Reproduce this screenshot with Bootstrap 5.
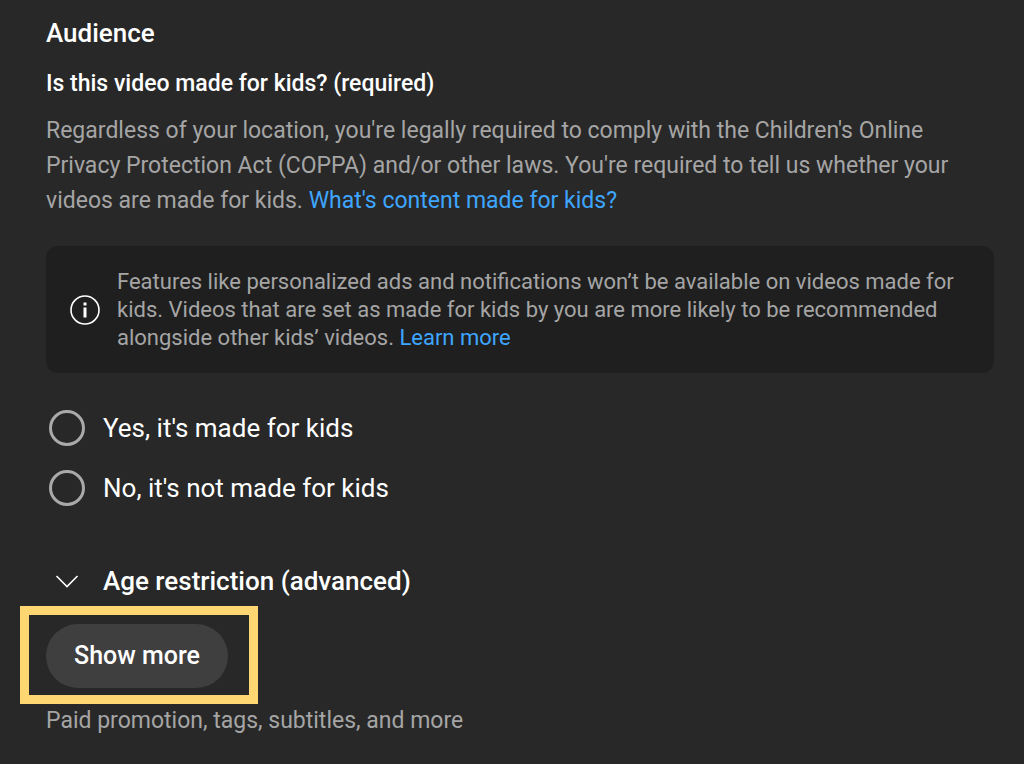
<!DOCTYPE html>
<html lang="en">
<head>
<meta charset="utf-8">
<meta name="viewport" content="width=device-width, initial-scale=1">
<title>Audience</title>
<link href="https://cdn.jsdelivr.net/npm/bootstrap@5.3.0/dist/css/bootstrap.min.css" rel="stylesheet">
<style>
body{background:#282828;color:#fff;font-family:Roboto,sans-serif;min-height:100vh}
.panel{padding:15px 30px 24px 46px}
.title{font-size:26px;line-height:36px;font-weight:500}
.question{font-size:23px;line-height:32px;font-weight:500;margin-top:17px}
.muted{color:#a5a5a5}
a{color:#3ea6ff;text-decoration:none}
.intro{font-size:23px;line-height:35px;margin-top:13px}
.notice{background:#1f1f1f;border-radius:12px;margin-top:28px;padding:22px 24px 21px;gap:17px}
.notice-text{font-size:22px;line-height:28px}
.choices{margin:37px 0 0 3px;gap:24px}
.choice{gap:18px;font-size:26px;line-height:36px}
.choice input{width:36px;height:36px;margin:0;background-color:transparent;border:3px solid #aaa;box-shadow:none}
.choice input:checked{background-color:#3ea6ff}
.advanced{gap:18px;font-size:26px;line-height:36px;font-weight:500;margin:57px 0 0 3px;color:#fff}
.highlight{border:9px solid #ffd772;margin:7px 0 0 -26px;padding:9px 21px 7px 17px}
.more{background:#3f3f3f;color:#fff;font-size:25px;line-height:36px;font-weight:500;padding:14px 28px;border:0}
.more:hover{background:#535353;color:#fff}
.hint{font-size:23px;line-height:32px;margin-top:1px}
</style>
</head>
<body>
<main class="panel">
<h1 class="title mb-0">Audience</h1>
<h2 class="question mb-0">Is this video made for kids? (required)</h2>
<p class="intro muted mb-0">Regardless of your location, you're legally required to comply with the Children's Online Privacy Protection Act (COPPA) and/or other laws. You're required to tell us whether your videos are made for kids. <a href="#">What's content made for kids?</a></p>
<div class="notice d-flex align-items-center">
<svg class="flex-shrink-0" width="30" height="30" viewBox="0 0 30 30" fill="none" stroke="#fff" aria-hidden="true"><circle cx="15" cy="15" r="14" stroke-width="1.6"/><path d="M15 12.500v10M15 7.500v3" stroke-width="3"/></svg>
<p class="notice-text muted mb-0">Features like personalized ads and notifications won’t be available on videos made for kids. Videos that are set as made for kids by you are more likely to be recommended alongside other kids’ videos. <a href="#">Learn more</a></p>
</div>
<div class="choices d-flex flex-column" role="radiogroup" aria-label="Is this video made for kids?">
<div class="choice d-flex align-items-center"><input class="form-check-input" type="radio" name="kids" id="kids-yes"><label for="kids-yes">Yes, it's made for kids</label></div>
<div class="choice d-flex align-items-center"><input class="form-check-input" type="radio" name="kids" id="kids-no"><label for="kids-no">No, it's not made for kids</label></div>
</div>
<button class="advanced d-flex align-items-center border-0 bg-transparent p-0" type="button">
<svg width="36" height="36" viewBox="0 0 36 36" fill="none" stroke="#fff" stroke-width="1.6" aria-hidden="true"><path d="M7.500 13 18 23.500l10.500-10.500"/></svg>
<span>Age restriction (advanced)</span></button>
<div class="d-flex"><div class="highlight"><button class="more btn rounded-pill" type="button">Show more</button></div></div>
<p class="hint muted mb-0">Paid promotion, tags, subtitles, and more</p>
</main>
<script src="https://cdn.jsdelivr.net/npm/bootstrap@5.3.0/dist/js/bootstrap.bundle.min.js"></script>
</body>
</html>
